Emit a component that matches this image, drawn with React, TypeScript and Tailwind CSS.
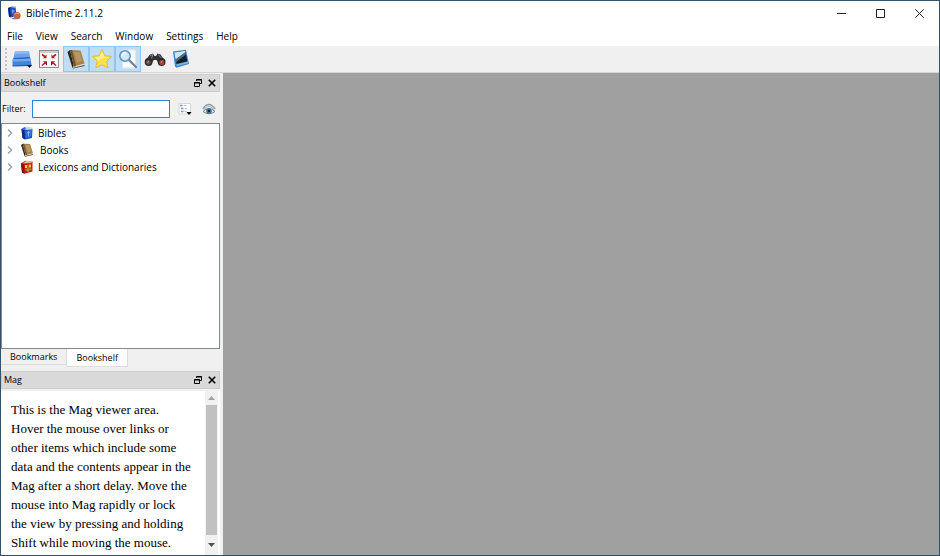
import { useState } from "react";
import type { ReactNode } from "react";

interface DockHeaderProps {
  title: string;
}

interface ToolButtonProps {
  label: string;
  active?: boolean;
  children: ReactNode;
}

interface Shelf {
  name: string;
  icon: ReactNode;
  gap: string;
}

const menus = ["File", "View", "Search", "Window", "Settings", "Help"];

function BibleIcon({ size }: { size: number }) {
  return (
    <svg width={size} height={size} viewBox="0 0 14 14">
      <path d="M1.5 3 4 1.5 12.5 3 12 12 5 13.5 2.5 12Z" fill="#1746b8" />
      <path d="M1.5 3 4 3 5 13.5 2.5 12Z" fill="#0b2a7c" />
      <path d="M3 2.5 5.5 .5 12.5 1.6 12.5 3.5 4 4Z" fill="#c9d6ee" />
      <path d="M1.5 3 5 1 6 3.5 4 4Z" fill="#3468d4" />
      <path d="M5 4.5 12 3.8 11.5 11 5.7 12.4Z" fill="#2f6ae6" />
      <path d="M8.5 5v5.5M6.8 7 10.2 6.4" stroke="#8fb0f0" strokeWidth="1" />
    </svg>
  );
}

function BookIcon({ size }: { size: number }) {
  return (
    <svg width={size} height={size} viewBox="0 0 20 20">
      <path d="M1.5 3 4 1 8 17.5 6.5 19Z" fill="#2d241b" />
      <path d="M6.5 19 8 16.5 18.5 14.5 18 16.5Z" fill="#e5dccb" />
      <path d="M6.5 19 7 19.6 18.5 17 18.5 16Z" fill="#4b3720" />
      <path d="M4 1 14.5 1.5 18.5 14.5 8 17.5Z" fill="#a5834f" />
      <path d="M4 1 6 1.1 10 17 8 17.5Z" fill="#6c5230" />
      <path d="M8 3 13.5 3 16 12 11 13.5Z" fill="#b99662" />
    </svg>
  );
}

function LexiconIcon() {
  return (
    <svg width="14" height="14" viewBox="0 0 14 14">
      <path d="M1 3.5 4 2 12.5 2.5 12.5 11.5 4.5 13.7 2 12.5Z" fill="#cf1717" />
      <path d="M1 3.5 3.6 3.5 4.5 13.7 2 12.5Z" fill="#870d0d" />
      <path d="M1.5 3 5 .8 12.5 1.2 12.5 3 4 4Z" fill="#e4473a" />
      <path d="M4 3 6 1.2 12 1.6 11.5 2.6Z" fill="#efe1b4" />
      <path d="M6 5v3M10 4.6v3" stroke="#f1d33b" strokeWidth="2" />
      <path d="M5.5 10 11.5 9.3" stroke="#6fa536" strokeWidth="2" />
      <path d="M8 4.5v7.5" stroke="#efb52a" strokeWidth=".8" />
    </svg>
  );
}

function AppIcon() {
  return (
    <svg width="14" height="14" viewBox="0 0 14 14">
      <path d="M1 2 3 1 8.5 1 9.5 9.5 4 11.5 2 10.5Z" fill="#1c4cc0" />
      <path d="M1 2 3 1.4 4 11.5 2 10.5Z" fill="#0c2870" />
      <path d="M3 1 4.5 0 9 .6 8.6 2Z" fill="#a9b8d6" />
      <path d="M5.8 3.5v4M4.6 5H7.4" stroke="#9ab6f2" />
      <circle cx="10" cy="9.7" r="3.6" fill="#c4653c" />
      <path d="M7.5 8.2Q10 6 12.3 8.2" stroke="#e9ab86" fill="none" />
      <path d="M4.5 12.3 8 11.5 9.5 13.2 6 13.5Z" fill="#7187bd" />
    </svg>
  );
}

function ShelfToolIcon() {
  return (
    <svg width="22" height="20" viewBox="0 0 22 20">
      <path d="M3 2.5 17 2 18 8 1.5 8.5Z" fill="#67a4ee" />
      <path d="M3 2.5 17 2 17.4 4.5 2.5 5Z" fill="#8bbcf5" />
      <path d="M1.5 8.5 18 8 18.5 9.7 1.2 10.2Z" fill="#2b66b8" />
      <path d="M.5 10.5 18.5 9.7 19.5 15.8.5 16.5Z" fill="#4284df" />
      <path d="M.5 10.5 18.5 9.7 19 12 .5 12.6Z" fill="#72aaf0" />
      <path d="M.5 16.2 19.5 15.6 19.5 17 .5 17.6Z" fill="#255caa" />
      <path d="M15 16h5L17.5 19Z" fill="#111" />
    </svg>
  );
}

function FullscreenIcon() {
  return (
    <svg width="20" height="18" viewBox="0 0 20 18">
      <rect x=".5" y=".5" width="19" height="17" fill="#f7f7f7" stroke="#8b8d90" />
      <path d="M1 1.5h18M1 2.5h18" stroke="#cfcfcf" />
      <g stroke="#c3161c" strokeWidth="1.6" fill="none">
        <path d="M3 4.5 6.5 7M17 4.5 13.5 7M3 15.5 6.5 12.5M17 15.5 13.5 12.5" />
      </g>
      <g fill="#c3161c">
        <path d="M7.5 4.5V8.3H4Z" />
        <path d="M12.5 4.5V8.3H16Z" />
        <path d="M7.5 15.3V11.3H4Z" />
        <path d="M12.5 15.3V11.3H16Z" />
      </g>
      <path d="M7.5 15.3V11.5M12.5 15.3V11.5" stroke="#4a1012" strokeWidth=".8" />
    </svg>
  );
}

function StarIcon() {
  return (
    <svg width="22" height="22" viewBox="0 0 22 22">
      <path
        d="M11 1.5 13.9 7.7 20.7 8.4 15.7 13 17.2 19.9 11 16.7 4.8 19.9 6.3 13 1.3 8.4 8.1 7.7Z"
        fill="#fbe04a"
        stroke="#e5bd38"
        strokeLinejoin="round"
      />
      <path d="M11 3.6 13.2 8.7 18.4 9.2Q11 9.6 5.6 13.5L7 12.6 3.5 9.3 8.8 8.7Z" fill="#fff18a" />
    </svg>
  );
}

function MagnifierIcon() {
  return (
    <svg width="22" height="22" viewBox="0 0 22 22">
      <path d="M5.5 2H18.5v18H5.5Z" fill="#f8fafc" stroke="#dfe6ec" />
      <path d="M12 12 19 19" stroke="#6f7f92" strokeWidth="2.2" strokeLinecap="round" />
      <circle cx="8" cy="8" r="5.2" fill="#d3e8f9" stroke="#5f94c8" strokeWidth="1.6" />
      <path d="M4.9 7.7Q5.5 4.8 8.9 4.8" stroke="#fff" strokeWidth="1.5" fill="none" />
    </svg>
  );
}

function BinocularsIcon() {
  return (
    <svg width="22" height="20" viewBox="0 0 22 20">
      <path d="M6 5.5 9 4.5 10.5 7 12 7 13.5 4.5 16.5 5.5 21 12 16 16 12.5 11 9.8 11 6.5 16 1 12Z" fill="#303234" />
      <path d="M6 6.5 9 5.4 7.5 9.5M14 5.6 17.5 9" stroke="#8a8d8f" fill="none" />
      <circle cx="4.6" cy="13" r="3.9" fill="#292b2d" />
      <circle cx="4.3" cy="13.4" r="2.4" fill="#6d4a45" />
      <circle cx="17.6" cy="13" r="3.9" fill="#292b2d" />
      <circle cx="17.8" cy="13.4" r="2.5" fill="#a3453c" />
      <path d="M3 13.6 5 12.2M16.8 13.4 18.6 12.2" stroke="#d39a92" />
    </svg>
  );
}

function BlueBookIcon() {
  return (
    <svg width="20" height="20" viewBox="0 0 20 20">
      <path d="M2 2.5 15 .8 18 15 5.5 18.8 4 17.5Z" fill="#3d85c6" />
      <path d="M3.2 3.4 14.3 1.8 16.4 12.4 5.6 15Z" fill="#15202b" />
      <path d="M3.2 3.4 14.3 1.8 14.5 3.2 4.6 10.5Z" fill="#cfe5f5" />
      <path d="M4.6 10.5 14.5 3.2 15 5.6 5.2 13Z" fill="#4d6d88" />
      <path d="M5.6 16.3 17 13.4" stroke="#7fb8e4" strokeWidth="1.6" />
    </svg>
  );
}

function GroupingIcon() {
  return (
    <svg width="14" height="14" viewBox="0 0 14 14">
      <rect x="1" y="1.5" width="11.5" height="10.5" fill="#fdfdff" stroke="#d2d5e3" />
      <path d="M2 3.5h2.5M3 6.5h2.5M3 9.5h2.5" stroke="#7f93b5" strokeWidth="1.6" />
      <path d="M5.5 3.5h3M6.5 6.5h2.5M6.5 9.5h2" stroke="#b4bed0" />
      <path d="M8.5 10h5L11 13Z" fill="#000" />
    </svg>
  );
}

function EyeIcon() {
  return (
    <svg width="14" height="14" viewBox="0 0 14 14">
      <path d="M.8 7Q6.5-2 13.2 7" fill="none" stroke="#8f9aa3" strokeWidth="1.4" />
      <path d="M2 7.5Q7 1.5 12 7.5" fill="none" stroke="#b4bdc4" strokeWidth="1.2" />
      <path d="M1 9.5Q7 3.5 13 9.5 7 14 1 9.5Z" fill="#dfe8ee" stroke="#788791" />
      <circle cx="7" cy="9" r="2.8" fill="#457391" />
      <circle cx="7" cy="9" r="1.2" fill="#14222e" />
    </svg>
  );
}

const shelves: Shelf[] = [
  { name: "Bibles", icon: <BibleIcon size={14} />, gap: "ml-1" },
  { name: "Books", icon: <BookIcon size={14} />, gap: "ml-1.5" },
  { name: "Lexicons and Dictionaries", icon: <LexiconIcon />, gap: "ml-1" },
];

function DockHeader({ title }: DockHeaderProps) {
  return (
    <header className="flex h-[18px] shrink-0 items-center border border-[#cdcdcd] bg-[#d9d9d9] pl-[2px] text-[9px]">
      <h2 className="flex-1">{title}</h2>
      <button aria-label={`Float ${title}`} className="grid h-3 w-3.5 place-items-center">
        <svg width="8" height="8" viewBox="0 0 8 8" fill="none" stroke="#000">
          <path d="M2.5 2V.5h5v4H6M2.5 1h5" />
          <path d="M.5 3.5h5v4h-5ZM.5 4h5" />
        </svg>
      </button>
      <button aria-label={`Close ${title}`} className="grid h-3 w-3.5 place-items-center">
        <svg width="8" height="8" viewBox="0 0 8 8" stroke="#000" strokeWidth="1.6">
          <path d="M.8.8 7.2 7.2M7.2.8.8 7.2" />
        </svg>
      </button>
    </header>
  );
}

function ToolButton({ label, active, children }: ToolButtonProps) {
  return (
    <button
      aria-label={label}
      aria-pressed={active}
      className={
        active
          ? "grid h-[26px] w-[26px] place-items-center border border-[#92c6ec] bg-[#bfdef5]"
          : "grid h-[26px] w-[26px] place-items-center"
      }
    >
      {children}
    </button>
  );
}

function App() {
  const [filter, setFilter] = useState("");
  const [tab, setTab] = useState<"Bookmarks" | "Bookshelf">("Bookshelf");

  return (
    <div className="flex h-screen flex-col border border-[#34516b] bg-[#f0f0f0] font-['Open_Sans',sans-serif] text-[10px] leading-4 text-black">
      <header className="flex h-6 shrink-0 items-center bg-white pl-[6px]">
        <AppIcon />
        <h1 className="ml-[5px] flex-1">BibleTime 2.11.2</h1>
        <div className="flex text-[#222]">
          <button aria-label="Minimize" className="grid h-6 w-[39px] place-items-center">
            <svg width="9" height="9" viewBox="0 0 9 9" stroke="currentColor">
              <path d="M0 4.5h9" />
            </svg>
          </button>
          <button aria-label="Maximize" className="grid h-6 w-[39px] place-items-center">
            <svg width="9" height="9" viewBox="0 0 9 9" fill="none" stroke="currentColor">
              <path d="M.5.5h8v8h-8Z" />
            </svg>
          </button>
          <button aria-label="Close" className="grid h-6 w-[39px] place-items-center">
            <svg width="9" height="9" viewBox="0 0 9 9" stroke="currentColor">
              <path d="M.3.3 8.7 8.7M8.7.3.3 8.7" />
            </svg>
          </button>
        </div>
      </header>

      <nav className="flex h-[21px] shrink-0 items-center gap-[13px] bg-white pl-[6px]">
        {menus.map((menu) => (
          <button key={menu}>{menu}</button>
        ))}
      </nav>

      <div role="toolbar" className="flex h-[27px] shrink-0 items-center border-b border-[#d5d5d5] pl-1">
        <span className="mr-[3px] h-[22px] border-l-2 border-dotted border-[#c4c4c4]" />
        <ToolButton label="Bookshelf">
          <ShelfToolIcon />
        </ToolButton>
        <ToolButton label="Fullscreen">
          <FullscreenIcon />
        </ToolButton>
        <span className="w-px" />
        <ToolButton label="Show bookshelf" active>
          <BookIcon size={20} />
        </ToolButton>
        <ToolButton label="Show bookmarks" active>
          <StarIcon />
        </ToolButton>
        <ToolButton label="Show mag" active>
          <MagnifierIcon />
        </ToolButton>
        <span className="w-px" />
        <ToolButton label="Search in open works">
          <BinocularsIcon />
        </ToolButton>
        <ToolButton label="Handbook">
          <BlueBookIcon />
        </ToolButton>
      </div>

      <div className="flex min-h-0 flex-1">
        <aside className="flex w-[222px] shrink-0 flex-col pr-[3px] pt-px">
          <section className="flex min-h-0 flex-[293] flex-col">
            <DockHeader title="Bookshelf" />
            <div className="flex h-[31px] shrink-0 items-center pl-px pt-[2px]">
              <label htmlFor="filter" className="w-[30px] text-[9px]">
                Filter:
              </label>
              <input
                id="filter"
                value={filter}
                onChange={(e) => setFilter(e.target.value)}
                className="h-[18px] min-w-0 flex-1 border border-[#2b84d2] bg-white px-1 outline-none"
              />
              <button aria-label="Grouping" className="ml-2">
                <GroupingIcon />
              </button>
              <button aria-label="Show hidden works" className="ml-2.5 mr-1">
                <EyeIcon />
              </button>
            </div>
            <ul className="min-h-0 flex-1 border border-[#828790] bg-white">
              {shelves
                .filter((shelf) => shelf.name.toLowerCase().includes(filter.toLowerCase()))
                .map((shelf) => (
                  <li key={shelf.name} className="flex h-[17px] items-center pl-[5px]">
                    <button aria-label={`Expand ${shelf.name}`} className="mr-[7px]">
                      <svg width="6" height="8" viewBox="0 0 6 8" fill="none" stroke="#9a9a9a" strokeWidth="1.2">
                        <path d="M1 .5 4.7 4 1 7.5" />
                      </svg>
                    </button>
                    {shelf.icon}
                    <span className={shelf.gap}>{shelf.name}</span>
                  </li>
                ))}
            </ul>
            <div role="tablist" className="flex h-[18px] shrink-0 text-[9px]">
              {(["Bookmarks", "Bookshelf"] as const).map((name) => (
                <button
                  key={name}
                  role="tab"
                  aria-selected={tab === name}
                  onClick={() => setTab(name)}
                  className={
                    tab === name
                      ? "h-[18px] border border-t-0 border-[#dcdcdc] bg-white px-[9px]"
                      : "h-4 border-b border-[#dcdcdc] px-[9px]"
                  }
                >
                  {name}
                </button>
              ))}
            </div>
          </section>

          <section className="mt-1 flex min-h-0 flex-[184] flex-col">
            <DockHeader title="Mag" />
            <div className="mt-[2px] flex min-h-0 flex-1 bg-white">
              <p className="min-w-0 flex-1 overflow-hidden pl-2.5 pr-[11px] pt-[9px] font-['Liberation_Serif',serif] text-[13px] leading-[19px]">
                This is the Mag viewer area. Hover the mouse over links or other items which include some data and the
                contents appear in the Mag after a short delay. Move the mouse into Mag rapidly or lock the view by
                pressing and holding Shift while moving the mouse.
              </p>
              <div className="mr-[2px] flex w-[13px] flex-col items-center bg-[#f1f1f1]">
                <button aria-label="Scroll up" className="grid h-3.5 place-items-center">
                  <svg width="7" height="4" viewBox="0 0 7 4">
                    <path d="M0 4 3.5 0 7 4Z" fill="#a3a3a3" />
                  </svg>
                </button>
                <div className="w-[11px] flex-1 bg-[#c1c1c1]" />
                <button aria-label="Scroll down" className="grid h-5 place-items-center">
                  <svg width="7" height="4" viewBox="0 0 7 4">
                    <path d="M0 0 3.5 4 7 0Z" fill="#505050" />
                  </svg>
                </button>
              </div>
            </div>
          </section>
        </aside>
        <main className="flex-1 bg-[#a0a0a0]" />
      </div>
    </div>
  );
}

export default App;
